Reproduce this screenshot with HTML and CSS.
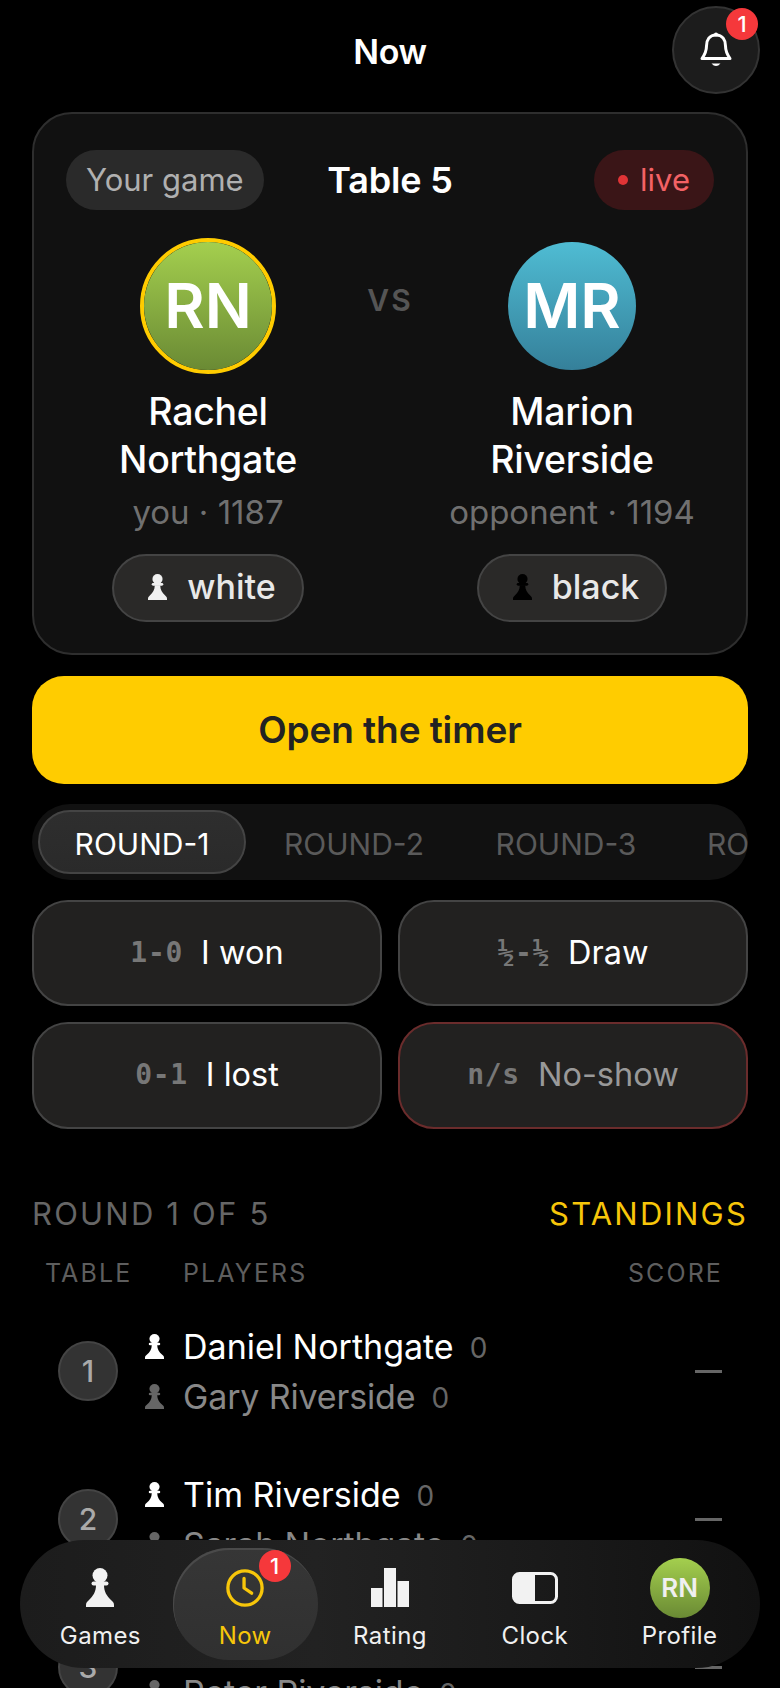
FILE: index.html
```html
<!DOCTYPE html>
<html lang="en">
<head>
<meta charset="utf-8">
<title>Now</title>
<link rel="stylesheet" href="styles.css">
</head>
<body>
<svg class="defs" width="0" height="0" aria-hidden="true">
  <symbol id="pawn" viewBox="0 0 28 39" preserveAspectRatio="none">
    <circle cx="14" cy="7.5" r="7.5"/>
    <rect x="5.5" y="13.5" width="17" height="4" rx="2"/>
    <path d="M10 17C10 24 7 28 3 32L1 34Q0 35 0 37V39H28V37Q28 35 27 34L25 32C21 28 18 24 18 17Z"/>
  </symbol>
</svg>
<div class="screen">
  <header class="topbar">
    <h1 class="title">Now</h1>
    <button class="bell">
      <svg class="bell-icon" viewBox="0 0 32 36"><path class="bell-line" d="M16 3C9.5 3 6.5 8 6.5 14C6.5 20 4.5 23 2 26.5H30C27.500 23 25.500 20 25.500 14C25.500 8 22.500 3 16 3Z"/><circle class="bell-fill" cx="16" cy="2.500" r="2"/><path class="bell-fill" d="M11.500 31.500H20.500Q16 36.500 11.500 31.500Z"/></svg>
      <span class="badge badge-bell">1</span>
    </button>
  </header>
  <main class="content">
    <section class="card">
      <div class="card-top">
        <span class="pill pill-muted">Your game</span>
        <span class="table-name">Table 5</span>
        <span class="pill pill-live"><i class="dot"></i>live</span>
      </div>
      <div class="match">
        <div class="player">
          <div class="avatar-ring"><div class="avatar avatar-green">RN</div></div>
          <div class="name">Rachel Northgate</div>
          <div class="sub">you · 1187</div>
          <div class="chip"><svg class="chip-pawn pawn-light"><use href="#pawn"/></svg>white</div>
        </div>
        <div class="vs">VS</div>
        <div class="player">
          <div class="avatar-ring avatar-ring-none"><div class="avatar avatar-blue">MR</div></div>
          <div class="name">Marion Riverside</div>
          <div class="sub">opponent · 1194</div>
          <div class="chip"><svg class="chip-pawn pawn-black"><use href="#pawn"/></svg>black</div>
        </div>
      </div>
    </section>
    <button class="cta">Open the timer</button>
    <nav class="tabs">
      <span class="tab tab-active">ROUND-1</span>
      <span class="tab">ROUND-2</span>
      <span class="tab">ROUND-3</span>
      <span class="tab">ROUND-4</span>
    </nav>
    <div class="results">
      <button class="result"><span class="code">1-0</span>I won</button>
      <button class="result"><span class="code">½-½</span>Draw</button>
      <button class="result"><span class="code">0-1</span>I lost</button>
      <button class="result result-noshow"><span class="code">n/s</span>No-show</button>
    </div>
    <div class="section-head">
      <span class="section-title">ROUND 1 OF 5</span>
      <span class="section-link">STANDINGS</span>
    </div>
    <div class="table-head">
      <span class="th-table">TABLE</span>
      <span class="th-players">PLAYERS</span>
      <span>SCORE</span>
    </div>
    <div class="row">
      <span class="num">1</span>
      <div class="players">
        <div class="line"><svg class="line-pawn pawn-white"><use href="#pawn"/></svg><span class="pname">Daniel Northgate</span><span class="pscore">0</span></div>
        <div class="line line-dim"><svg class="line-pawn pawn-dim"><use href="#pawn"/></svg><span class="pname">Gary Riverside</span><span class="pscore">0</span></div>
      </div>
      <span class="dash"></span>
    </div>
    <div class="row">
      <span class="num">2</span>
      <div class="players">
        <div class="line"><svg class="line-pawn pawn-white"><use href="#pawn"/></svg><span class="pname">Tim Riverside</span><span class="pscore">0</span></div>
        <div class="line line-dim"><svg class="line-pawn pawn-dim"><use href="#pawn"/></svg><span class="pname">Sarah Northgate</span><span class="pscore">0</span></div>
      </div>
      <span class="dash"></span>
    </div>
    <div class="row">
      <span class="num">3</span>
      <div class="players">
        <div class="line"><svg class="line-pawn pawn-white"><use href="#pawn"/></svg><span class="pname">Anna Northgate</span><span class="pscore">0</span></div>
        <div class="line line-dim"><svg class="line-pawn pawn-dim"><use href="#pawn"/></svg><span class="pname">Peter Riverside</span><span class="pscore">0</span></div>
      </div>
      <span class="dash"></span>
    </div>
  </main>
  <nav class="dock">
    <a class="dock-item">
      <svg class="dock-pawn"><use href="#pawn"/></svg>
      <span>Games</span>
    </a>
    <a class="dock-item dock-active">
      <svg class="dock-clock" viewBox="0 0 40 40"><circle cx="20" cy="20" r="18"/><path d="M19 10V20L27 25.500"/></svg>
      <span>Now</span>
      <span class="badge badge-dock">1</span>
    </a>
    <a class="dock-item">
      <svg class="dock-bars" viewBox="0 0 38 39"><rect x="0" y="20" width="11.500" height="19"/><rect x="13" y="0" width="12" height="39"/><rect x="26.500" y="13" width="11.500" height="26"/></svg>
      <span>Rating</span>
    </a>
    <a class="dock-item">
      <svg class="dock-timer" viewBox="0 0 46 32"><rect class="timer-box" x="1.500" y="1.500" width="43" height="29" rx="6"/><path class="timer-fill" d="M7 1.500H23V30.500H7A5.500 5.500 0 0 1 1.500 25V7A5.500 5.500 0 0 1 7 1.500Z"/></svg>
      <span>Clock</span>
    </a>
    <a class="dock-item">
      <span class="dock-avatar">RN</span>
      <span>Profile</span>
    </a>
  </nav>
</div>
</body>
</html>
```
FILE: styles.css
```css
* { box-sizing: border-box; }
html, body { margin: 0; padding: 0; background: #000; }
body { font-family: Inter, "Noto Sans", "Liberation Sans", sans-serif; color: #fff; }
button { font-family: inherit; padding: 0; cursor: pointer; }
.defs { position: absolute; }
.screen { position: relative; width: 780px; height: 1688px; overflow: hidden; background: #000; }

.topbar { position: relative; height: 112px; display: flex; justify-content: center; padding-top: 32px; }
.title { margin: 0; font-size: 34px; line-height: 40px; font-weight: 600; letter-spacing: -0.3px; }
.bell { position: absolute; top: 6px; right: 20px; width: 88px; height: 88px; border-radius: 50%; background: #1c1c1c; border: 2px solid #333; display: flex; align-items: center; justify-content: center; }
.bell-icon { width: 32px; height: 36px; overflow: visible; }
.bell-line { fill: none; stroke: #fff; stroke-width: 3; stroke-linejoin: round; }
.bell-fill { fill: #fff; }
.badge { position: absolute; width: 32px; height: 32px; border-radius: 50%; background: #f5383b; color: #fff; font-size: 22px; font-weight: 500; line-height: 32px; text-align: center; letter-spacing: 0; }
.badge-bell { top: 0; right: 0; }
.badge-dock { top: 2px; right: 27px; }

.content { padding: 0 32px; }
.card { height: 543px; background: #111; border: 2px solid #2e2e2e; border-radius: 40px; padding: 36px 32px 0; }
.card-top { display: flex; align-items: center; justify-content: space-between; position: relative; height: 60px; }
.pill { height: 60px; border-radius: 30px; font-size: 31px; line-height: 60px; display: flex; align-items: center; }
.pill-muted { background: #2a2a2a; color: #b0b0b0; padding: 0 20px; }
.pill-live { background: #3a1517; color: #f36265; padding: 0 24px; gap: 12px; }
.dot { width: 10px; height: 10px; border-radius: 50%; background: #e03436; }
.table-name { position: absolute; left: 0; right: 0; text-align: center; font-size: 36px; font-weight: 600; letter-spacing: -0.2px; pointer-events: none; }

.match { display: grid; grid-template-columns: 1fr 80px 1fr; margin-top: 28px; }
.player { display: flex; flex-direction: column; align-items: center; text-align: center; }
.avatar-ring { width: 136px; height: 136px; border-radius: 50%; border: 4px solid #ffcc00; }
.avatar-ring-none { border-color: transparent; }
.avatar { width: 128px; height: 128px; border-radius: 50%; font-size: 62px; font-weight: 600; line-height: 128px; text-align: center; }
.avatar-green { background: linear-gradient(180deg, #a4cf4e, #6a8a34); }
.avatar-blue { background: linear-gradient(180deg, #4fbcd3, #35809a); }
.vs { text-align: center; padding-top: 42px; font-size: 30px; line-height: 40px; font-weight: 600; letter-spacing: 2px; color: #555; }
.name { margin-top: 14px; font-size: 37.500px; line-height: 48px; font-weight: 500; max-width: 240px; letter-spacing: -0.3px; }
.sub { margin-top: 8px; font-size: 33px; line-height: 40px; color: #707070; white-space: nowrap; }
.chip { margin-top: 22px; height: 68px; padding: 0 26px 3px 34px; border-radius: 34px; background: #2a2928; border: 2px solid #444; display: flex; align-items: center; gap: 20px; font-size: 34px; font-weight: 500; color: #e8e8e8; }
.chip-pawn { width: 19px; height: 26px; }
.pawn-light { fill: #f0f0f0; }
.pawn-black { fill: #000; }

.cta { display: block; width: 100%; height: 108px; margin-top: 21px; padding-bottom: 2px; border: 0; border-radius: 32px; background: #ffcc00; color: #222; font-size: 37px; font-weight: 600; letter-spacing: -0.1px; }

.tabs { margin-top: 20px; height: 76px; border-radius: 38px; background: #111; padding: 6px; display: flex; gap: 4px; overflow: hidden; white-space: nowrap; }
.tab { flex: none; width: 208px; height: 64px; padding-top: 3px; border-radius: 32px; display: flex; align-items: center; justify-content: center; font-size: 30px; font-weight: 400; color: #5a5a5a; border: 2px solid transparent; }
.tab-active { background: linear-gradient(180deg, #2e2e2e, #2a2a2a); border-color: #444; color: #fff; }

.results { display: grid; grid-template-columns: 1fr 1fr; grid-template-rows: 106px 107px; gap: 16px; margin-top: 20px; }
.result { border-radius: 36px; background: #222120; border: 2px solid #444; color: #fff; font-size: 32.500px; padding-bottom: 2px; display: flex; align-items: center; justify-content: center; gap: 18px; }
.result-noshow { border-color: #6b2c2c; color: #999; }
.code { font-family: "DejaVu Sans Mono", "Liberation Mono", monospace; font-size: 28px; font-weight: 700; letter-spacing: 0.7px; color: #777; }

.section-head { display: flex; justify-content: space-between; margin-top: 67px; font-size: 31px; line-height: 36px; letter-spacing: 2.200px; }
.section-title { color: #666; }
.section-link { color: #f7c60a; }
.table-head { display: flex; margin-top: 25px; margin-bottom: 8px; padding: 0 25px 0 13px; font-size: 25px; line-height: 32px; letter-spacing: 2.100px; color: #5e5e5e; }
.th-table { width: 138px; }
.th-players { flex: 1; }

.row { height: 148px; display: flex; align-items: center; padding: 0 26px; }
.num { flex: none; width: 60px; height: 60px; border-radius: 50%; background: #333; border: 2px solid #444; color: #aaa; font-size: 30px; font-weight: 500; line-height: 56px; text-align: center; }
.players { flex: 1; margin-left: 27px; }
.line { display: flex; align-items: center; height: 50px; }
.line-pawn { flex: none; width: 19px; height: 25px; margin-right: 19px; }
.pawn-white { fill: #fff; }
.pawn-dim { fill: #666; }
.pname { font-size: 34px; }
.line-dim .pname { color: #888; letter-spacing: -0.15px; }
.pscore { font-size: 28px; color: #666; margin-left: 16px; margin-top: 4px; }
.dash { flex: none; width: 27px; height: 3px; background: #666; }

.dock { position: absolute; left: 20px; top: 1540px; width: 740px; height: 128px; border-radius: 64px; padding: 8px; display: flex; background: linear-gradient(90deg, #1c1c1c 0%, #222 40%, #1a1a1a 70%, #111 100%); }
.dock-item { position: relative; flex: 1; min-width: 0; border-radius: 56px; display: flex; flex-direction: column; align-items: center; justify-content: flex-end; padding-bottom: 8px; font-size: 24px; line-height: 32px; font-weight: 400; color: #f0f0f0; letter-spacing: 0.4px; }
.dock-item svg, .dock-avatar { margin-bottom: 13px; }
.dock-active { background: linear-gradient(180deg, #363636, #303030); box-shadow: inset 1px 2px 0 #4a4a4a; color: #f7c60a; }
.dock-pawn { width: 28px; height: 39px; fill: #f2f2f2; }
.dock-clock { width: 38px; height: 38px; fill: none; stroke: #f7c60a; stroke-width: 3.500; stroke-linecap: round; stroke-linejoin: round; overflow: visible; }
.dock-bars { width: 38px; height: 39px; fill: #f2f2f2; }
.dock-item .dock-timer { width: 46px; height: 32px; margin-bottom: 16px; }
.timer-box { fill: none; stroke: #f2f2f2; stroke-width: 3; }
.timer-fill { fill: #f2f2f2; }
.dock-item .dock-avatar { width: 60px; height: 60px; border-radius: 50%; background: linear-gradient(180deg, #a4cf4e, #6a8a34); font-size: 26px; font-weight: 600; line-height: 60px; text-align: center; color: #f0f0f0; margin-bottom: 2px; letter-spacing: 0; }
```
